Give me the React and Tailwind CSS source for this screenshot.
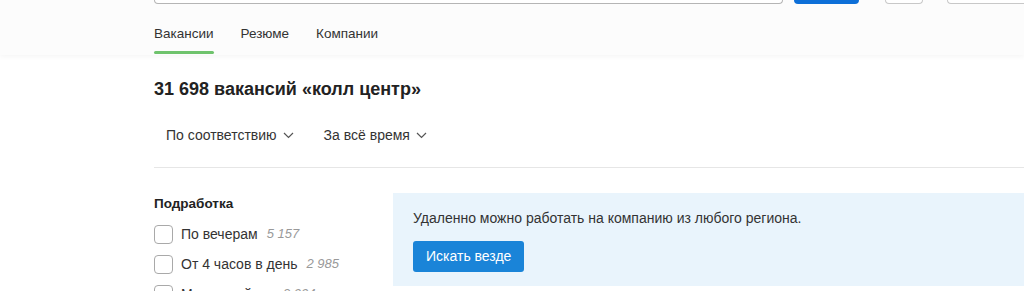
import React from 'react';

const Checkbox = ({ label, count }) => (
  <label className="flex items-center h-[30px]">
    <span className="w-[19px] h-[19px] rounded-[4px] border border-[#a9a9a9] bg-white shrink-0" />
    <span className="ml-[8px] text-[14px] text-[#333]">{label}</span>
    <span className="ml-[9px] text-[13px] italic text-[#999]">{count}</span>
  </label>
);

const App = () => {
  return (
    <div className="w-[1024px] h-[291px] overflow-hidden bg-white" style={{ fontFamily: '"Liberation Sans", Arial, sans-serif' }}>
      {/* header */}
      <div className="bg-[#fcfcfc] shadow-[0_2px_5px_rgba(0,0,0,0.04)] h-[55px]">
        <div className="flex items-start pl-[154px] h-[4px]">
          <div className="w-[629px] h-[4px] border border-t-0 border-[#b5b5b5] rounded-b-[4px] bg-white" />
          <div className="w-[65px] h-[4px] ml-[11px] bg-[#0d6fd8] rounded-b-[4px]" />
          <div className="w-[38px] h-[4px] ml-[26px] border border-t-0 border-[#c8c8c8] rounded-b-[4px] bg-white" />
          <div className="flex-1 h-[4px] ml-[24px] border border-t-0 border-r-0 border-[#c8c8c8] rounded-bl-[4px] bg-white" />
        </div>
        <nav className="flex gap-[27px] pl-[154px] mt-[21px] text-[13.5px] text-[#333]">
          <div className="flex flex-col">
            <span className="leading-[18px]">Вакансии</span>
            <span className="mt-[8px] h-[3px] bg-[#6fc36d] rounded-full" />
          </div>
          <span className="leading-[18px]">Резюме</span>
          <span className="leading-[18px]">Компании</span>
        </nav>
      </div>

      {/* results header */}
      <div className="pl-[154px]">
        <h1 className="mt-[23px] text-[18px] font-bold text-[#222] leading-[22px]">31 698 вакансий «колл центр»</h1>
        <div className="flex gap-[30px] pl-[12px] mt-[26px] text-[14px] text-[#333] leading-[18px]">
          <span className="flex items-center gap-[6px]">
            По соответствию
            <svg width="11" height="7" viewBox="0 0 11 7" fill="none" stroke="#555" strokeWidth="1.2"><path d="M1 1l4.5 4.5L10 1" /></svg>
          </span>
          <span className="flex items-center gap-[6px]">
            За всё время
            <svg width="11" height="7" viewBox="0 0 11 7" fill="none" stroke="#555" strokeWidth="1.2"><path d="M1 1l4.5 4.5L10 1" /></svg>
          </span>
        </div>
        <div className="mt-[23px] h-px bg-[#e6e6e6]" />

        <div className="flex mt-[25px]">
          <div className="w-[239px] shrink-0">
            <h3 className="mt-[2px] text-[13.5px] font-bold text-[#222] leading-[18px]">Подработка</h3>
            <div className="mt-[6px]">
              <Checkbox label="По вечерам" count="5 157" />
              <Checkbox label="От 4 часов в день" count="2 985" />
              <Checkbox label="Можно сейчас" count="2 004" />
            </div>
          </div>
          <div className="flex-1 bg-[#e9f4fc] h-[93px] pl-[20px] pt-[16px]">
            <p className="text-[14px] text-[#333] leading-[18px]">Удаленно можно работать на компанию из любого региона.</p>
            <button className="mt-[14px] h-[31px] px-[13px] rounded-[3px] bg-[#1a84d8] text-white text-[14px]">Искать везде</button>
          </div>
        </div>
      </div>
    </div>
  );
};

export default App;
